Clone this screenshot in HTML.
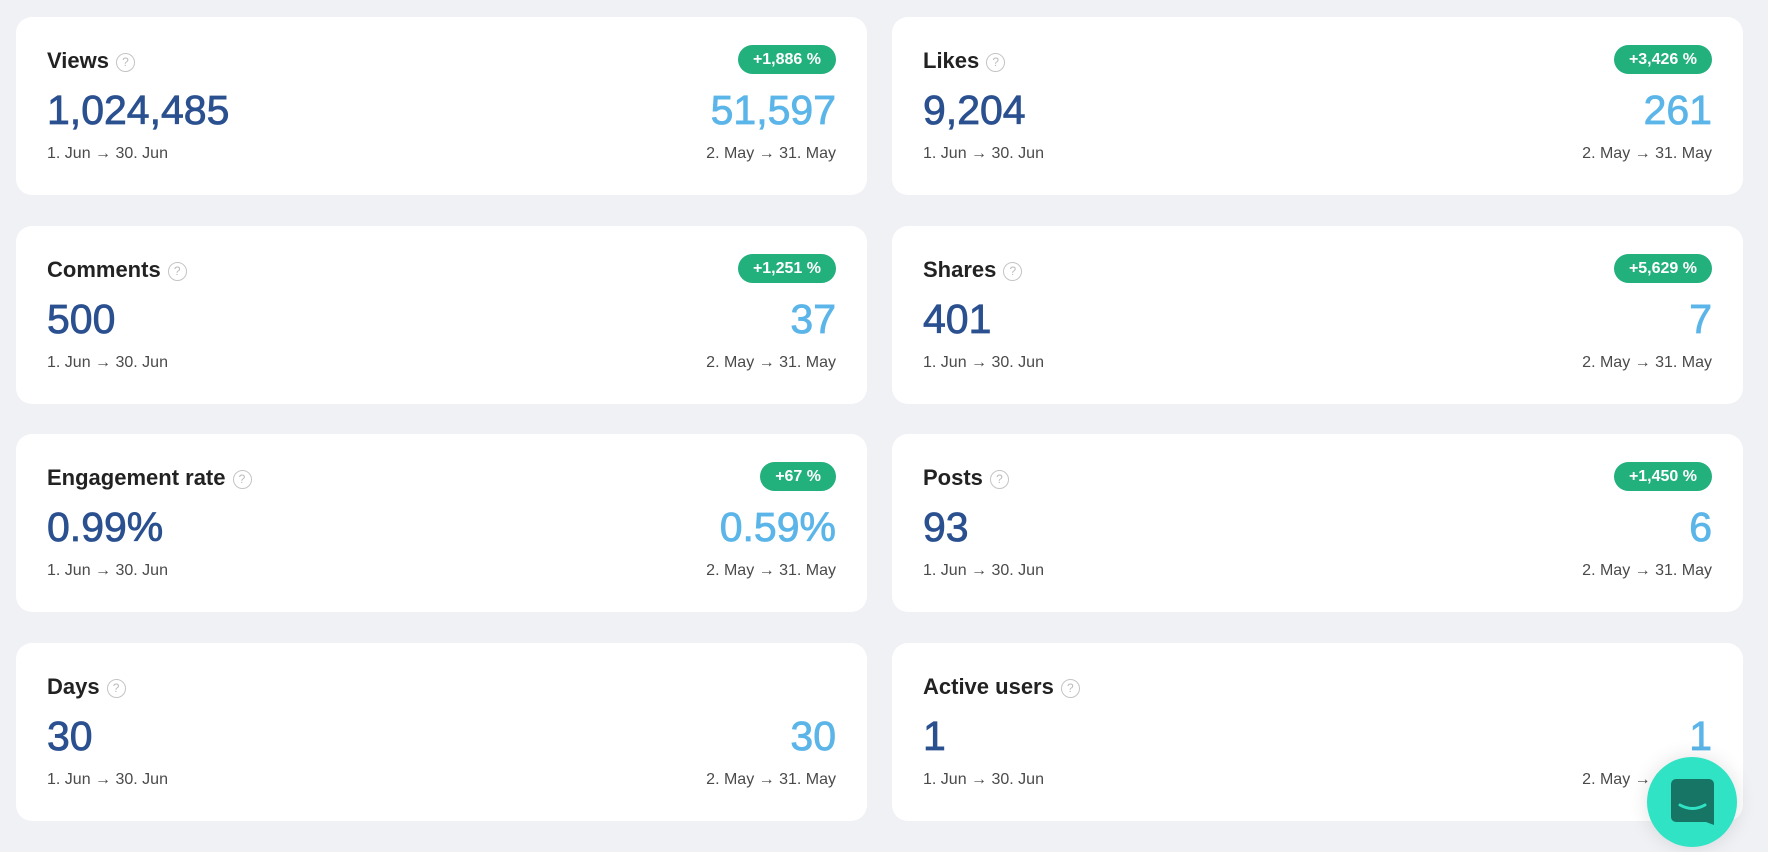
<!DOCTYPE html>
<html><head><meta charset="utf-8"><style>
body{margin:0;width:1768px;height:847px;background:#f0f1f5;font-family:"Liberation Sans",sans-serif;position:relative;overflow:hidden}
.c{position:absolute;width:851px;height:178px;background:#fff;border-radius:16px}
.t{position:absolute;left:31px;top:30px;font-size:22px;font-weight:bold;color:#222;line-height:28px;white-space:nowrap}
.q{display:inline-block;width:17px;height:17px;border:1.5px solid #c4c4c4;border-radius:50%;color:#bbb;font-size:12px;line-height:17px;text-align:center;font-weight:normal;vertical-align:2px;margin-left:7px}
.b{position:absolute;right:31px;top:28px;height:29px;line-height:29px;padding:0 15px;background:#22b07d;color:#fff;border-radius:15px;font-size:16px;font-weight:bold}
.n{position:absolute;top:69px;font-size:41px;line-height:48px;font-weight:normal;-webkit-text-stroke:0.8px currentColor}
.l{left:31px;color:#2a5090}.r{right:31px;color:#5bb5e8}
.d{position:absolute;top:127px;font-size:16px;color:#4a4a4a;line-height:20px}
.chat{position:absolute;left:1647px;top:757px;width:90px;height:90px;border-radius:50%;background:#30e3c4;box-shadow:0 0 20px rgba(0,0,0,.12)}
</style></head><body>

<div class="c" style="left:16px;top:17px"><div class="t">Views<span class="q">?</span></div><div class="b">+1,886 %</div><div class="n l">1,024,485</div><div class="n r">51,597</div><div class="d" style="left:31px">1. Jun → 30. Jun</div><div class="d" style="right:31px">2. May → 31. May</div></div>
<div class="c" style="left:892px;top:17px"><div class="t">Likes<span class="q">?</span></div><div class="b">+3,426 %</div><div class="n l">9,204</div><div class="n r">261</div><div class="d" style="left:31px">1. Jun → 30. Jun</div><div class="d" style="right:31px">2. May → 31. May</div></div>

<div class="c" style="left:16px;top:226px"><div class="t">Comments<span class="q">?</span></div><div class="b">+1,251 %</div><div class="n l">500</div><div class="n r">37</div><div class="d" style="left:31px">1. Jun → 30. Jun</div><div class="d" style="right:31px">2. May → 31. May</div></div>
<div class="c" style="left:892px;top:226px"><div class="t">Shares<span class="q">?</span></div><div class="b">+5,629 %</div><div class="n l">401</div><div class="n r">7</div><div class="d" style="left:31px">1. Jun → 30. Jun</div><div class="d" style="right:31px">2. May → 31. May</div></div>

<div class="c" style="left:16px;top:434px"><div class="t">Engagement rate<span class="q">?</span></div><div class="b">+67 %</div><div class="n l">0.99%</div><div class="n r">0.59%</div><div class="d" style="left:31px">1. Jun → 30. Jun</div><div class="d" style="right:31px">2. May → 31. May</div></div>
<div class="c" style="left:892px;top:434px"><div class="t">Posts<span class="q">?</span></div><div class="b">+1,450 %</div><div class="n l">93</div><div class="n r">6</div><div class="d" style="left:31px">1. Jun → 30. Jun</div><div class="d" style="right:31px">2. May → 31. May</div></div>

<div class="c" style="left:16px;top:643px"><div class="t">Days<span class="q">?</span></div><div class="n l">30</div><div class="n r">30</div><div class="d" style="left:31px">1. Jun → 30. Jun</div><div class="d" style="right:31px">2. May → 31. May</div></div>
<div class="c" style="left:892px;top:643px"><div class="t">Active users<span class="q">?</span></div><div class="n l">1</div><div class="n r">1</div><div class="d" style="left:31px">1. Jun → 30. Jun</div><div class="d" style="right:31px">2. May → 31. May</div></div>

<div class="chat"><svg width="90" height="90" viewBox="0 0 90 90"><path d="M24 27a5 5 0 0 1 5-5h33a5 5 0 0 1 5 5v41l-8-3H29a5 5 0 0 1-5-5z" fill="#167565"/><path d="M33 48q12.5 7 25 0" stroke="#30e3c4" stroke-width="3" fill="none" stroke-linecap="round"/></svg></div>
</body></html>
